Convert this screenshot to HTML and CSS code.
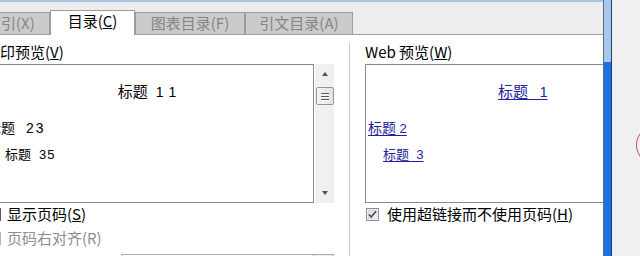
FILE: index.html
```html
<!DOCTYPE html>
<html>
<head>
<meta charset="utf-8">
<link rel="stylesheet" href="styles.css">
</head>
<body>
<div class="screen">
  <div class="dialog">
    <div class="topline"></div>
    <div class="tabbar">
      <div class="tab t1">引(X)</div>
      <div class="tab active">目录(<u>C</u>)</div>
      <div class="tab t3">图表目录(F)</div>
      <div class="tab t4">引文目录(A)</div>
    </div>
    <div class="content">
      <div class="left">
        <div class="label">印预览(<u>V</u>)</div>
        <div class="preview-row">
          <div class="preview">
            <div class="h1 center">标题<span class="num d1">1</span><span class="num d2">1</span></div>
            <div class="h2 pl-l2">标题<span class="num d3">2</span><span class="num d4">3</span></div>
            <div class="h3 pl-l3">标题<span class="num d5">3</span><span class="num d6">5</span></div>
          </div>
          <div class="scrollbar">
            <div class="arrow up"></div>
            <div class="thumb"><i></i><i></i><i></i></div>
            <div class="track"></div>
            <div class="arrow down"></div>
          </div>
        </div>
        <div class="check left-check"><span class="box"></span><span>显示页码(<u>S</u>)</span></div>
        <div class="check left-check disabled"><span class="box"></span><span>页码右对齐(R)</span></div>
        <div class="combo"><div class="combo-btn"></div></div>
      </div>
      <div class="divider"></div>
      <div class="right">
        <div class="label">Web 预览(<u>W</u>)</div>
        <div class="preview web">
          <div class="h1 pl-w1"><span class="link">标题<span class="num">&nbsp;&nbsp;&nbsp;1</span></span></div>
          <div class="h2 pl-w2"><span class="link">标题<span class="num">&nbsp;2</span></span></div>
          <div class="h3 pl-w3"><span class="link">标题<span class="num">&nbsp;&nbsp;3</span></span></div>
        </div>
        <div class="check right-check">
          <svg class="cbox" width="13" height="13" viewBox="0 0 13 13">
            <defs>
              <linearGradient id="cg" x1="0" y1="0" x2="1" y2="1">
                <stop offset="0" stop-color="#dcdcdc"/>
                <stop offset="1" stop-color="#fbfbfb"/>
              </linearGradient>
            </defs>
            <rect x="0.5" y="0.5" width="12" height="12" fill="#fff" stroke="#8e8f8f"/>
            <rect x="2" y="2" width="9" height="9" fill="url(#cg)" stroke="#c4c4c4" stroke-width="0.6"/>
            <path d="M3 6.5 L5.2 9 L10 3.3" fill="none" stroke="#3a4f6e" stroke-width="1.7"/>
          </svg>
          <span>使用超链接而不使用页码(<u>H</u>)</span>
        </div>
      </div>
    </div>
  </div>
  <div class="frame"></div>
  <div class="outside"><div class="circle"></div></div>
</div>
</body>
</html>
```
FILE: styles.css
```css
* { box-sizing: border-box; }
html, body { margin: 0; padding: 0; }
body {
  width: 640px;
  height: 256px;
  overflow: hidden;
  font-family: "Noto Sans CJK SC", sans-serif;
  font-size: 15px;
  color: #000;
  background: #f0f0f0;
}
u { text-decoration: underline; text-underline-offset: 1px; }

.screen { display: flex; width: 640px; height: 256px; overflow: hidden; }

.dialog {
  width: 603px;
  flex: none;
  display: flex;
  flex-direction: column;
  background: #fff;
  overflow: hidden;
}
.topline { height: 2px; flex: none; background: #a9c5e6; }

.tabbar {
  height: 33px;
  flex: none;
  background: #ededed;
  border-bottom: 1px solid #a0a0a0;
  display: flex;
  align-items: flex-end;
}
.tab {
  flex: none;
  height: 22px;
  background: #cbcbcb;
  border: 1px solid #9c9c9c;
  border-bottom: none;
  color: #858585;
  text-align: center;
  line-height: 20px;
  white-space: nowrap;
}
.t1 { width: 50px; border-left: none; text-align: left; padding-left: 1px; }
.t3 { width: 110px; }
.t4 { width: 108px; }
.tab.active {
  width: 85px;
  height: 25px;
  margin-bottom: -1px;
  background: #fff;
  color: #000;
  line-height: 20px;
}

.content { flex: 1; display: flex; min-height: 0; overflow: hidden; }

.left { width: 349px; flex: none; display: flex; flex-direction: column; }
.divider { width: 1px; flex: none; margin-top: 8px; background: #c9c9c9; }
.right { flex: 1; display: flex; flex-direction: column; padding-left: 15px; }

.label { height: 18px; line-height: 18px; margin-top: 8px; white-space: nowrap; flex: none; }

.preview-row { display: flex; margin-top: 3px; margin-left: -20px; height: 139px; flex: none; }
.preview {
  width: 334px;
  height: 139px;
  flex: none;
  border: 1px solid #8a8a8a;
  background: #fff;
  white-space: nowrap;
}
.web { width: auto; margin-top: 3px; border-right: none; }

.h1 { height: 20px; line-height: 20px; font-size: 15px; margin-top: 16px; }
.h2 { height: 20px; line-height: 20px; font-size: 14px; margin-top: 16px; }
.h3 { height: 18px; line-height: 18px; font-size: 13px; margin-top: 8px; }
.center { text-align: center; }
.num { font-family: "Liberation Sans", Arial, sans-serif; font-size: 14px; }
.h3 .num { font-size: 13px; }
.d1 { margin-left: 8px; }
.d2 { margin-left: 5px; }
.d3 { margin-left: 11px; }
.d4 { margin-left: 2px; }
.d5 { margin-left: 8px; }
.d6 { margin-left: 1px; }
.pl-l2 { padding-left: 6px; }
.pl-l3 { padding-left: 24px; }
.pl-w1 { padding-left: 132px; }
.pl-w2 { padding-left: 2px; }
.pl-w3 { padding-left: 17px; }
.link { color: #22229e; text-decoration: underline; text-underline-offset: 2px; }
.h2 .link .num, .h3 .link .num { font-size: 13px; }

.scrollbar {
  width: 19px;
  flex: none;
  margin-left: 1px;
  background: #f0f0f0;
  display: flex;
  flex-direction: column;
  align-items: center;
}
.arrow { width: 0; height: 0; border-left: 3.5px solid transparent; border-right: 3.5px solid transparent; }
.arrow.up { margin-top: 8px; border-bottom: 4px solid #505050; }
.arrow.down { margin-bottom: 8px; border-top: 4px solid #505050; }
.thumb {
  margin-top: 11px;
  width: 18px;
  height: 18px;
  border: 1px solid #979797;
  border-radius: 2px;
  background: linear-gradient(to right, #f6f6f6, #e2e2e2);
  display: flex;
  flex-direction: column;
  align-items: center;
  justify-content: center;
  gap: 2px;
}
.thumb i { display: block; width: 8px; height: 1px; background: #5a5a5a; box-shadow: 0 1px 0 #fff; }
.track { flex: 1; }

.check { display: flex; align-items: center; height: 18px; line-height: 18px; white-space: nowrap; flex: none; }
.left-check { margin-top: 2px; }
.left-check + .left-check { margin-top: 6px; }
.left-check .box {
  width: 13px;
  height: 13px;
  margin-left: -12px;
  margin-right: 6px;
  border: 1px solid #5c5c5c;
  background: #f4f4f4;
  flex: none;
}
.left-check.disabled { color: #8d8d8d; }
.left-check.disabled .box { border-color: #b5b5b5; }

.right-check { margin-top: 2px; }
.cbox { margin-left: 1px; margin-right: 8px; flex: none; }

.combo {
  margin-top: 7px;
  margin-left: 121px;
  width: 213px;
  height: 22px;
  border: 1px solid #adadad;
  display: flex;
  justify-content: flex-end;
  flex: none;
}
.combo-btn { width: 20px; border-left: 1px solid #adadad; background: #ececec; }

.frame {
  width: 9px;
  flex: none;
  border-left: 1px solid #5e6c80;
  border-right: 1px solid #1a3e7c;
  background: linear-gradient(to bottom, #a8c8ee 0, #a8c8ee 62px, #1d6fe2 62px, #1d6fe2 100%);
}
.outside { flex: 1; position: relative; overflow: hidden; background: #f0f0f0; }
.circle {
  position: absolute;
  left: 24px;
  top: 125px;
  width: 40px;
  height: 40px;
  border: 1.5px solid #c65050;
  border-radius: 50%;
}
```
